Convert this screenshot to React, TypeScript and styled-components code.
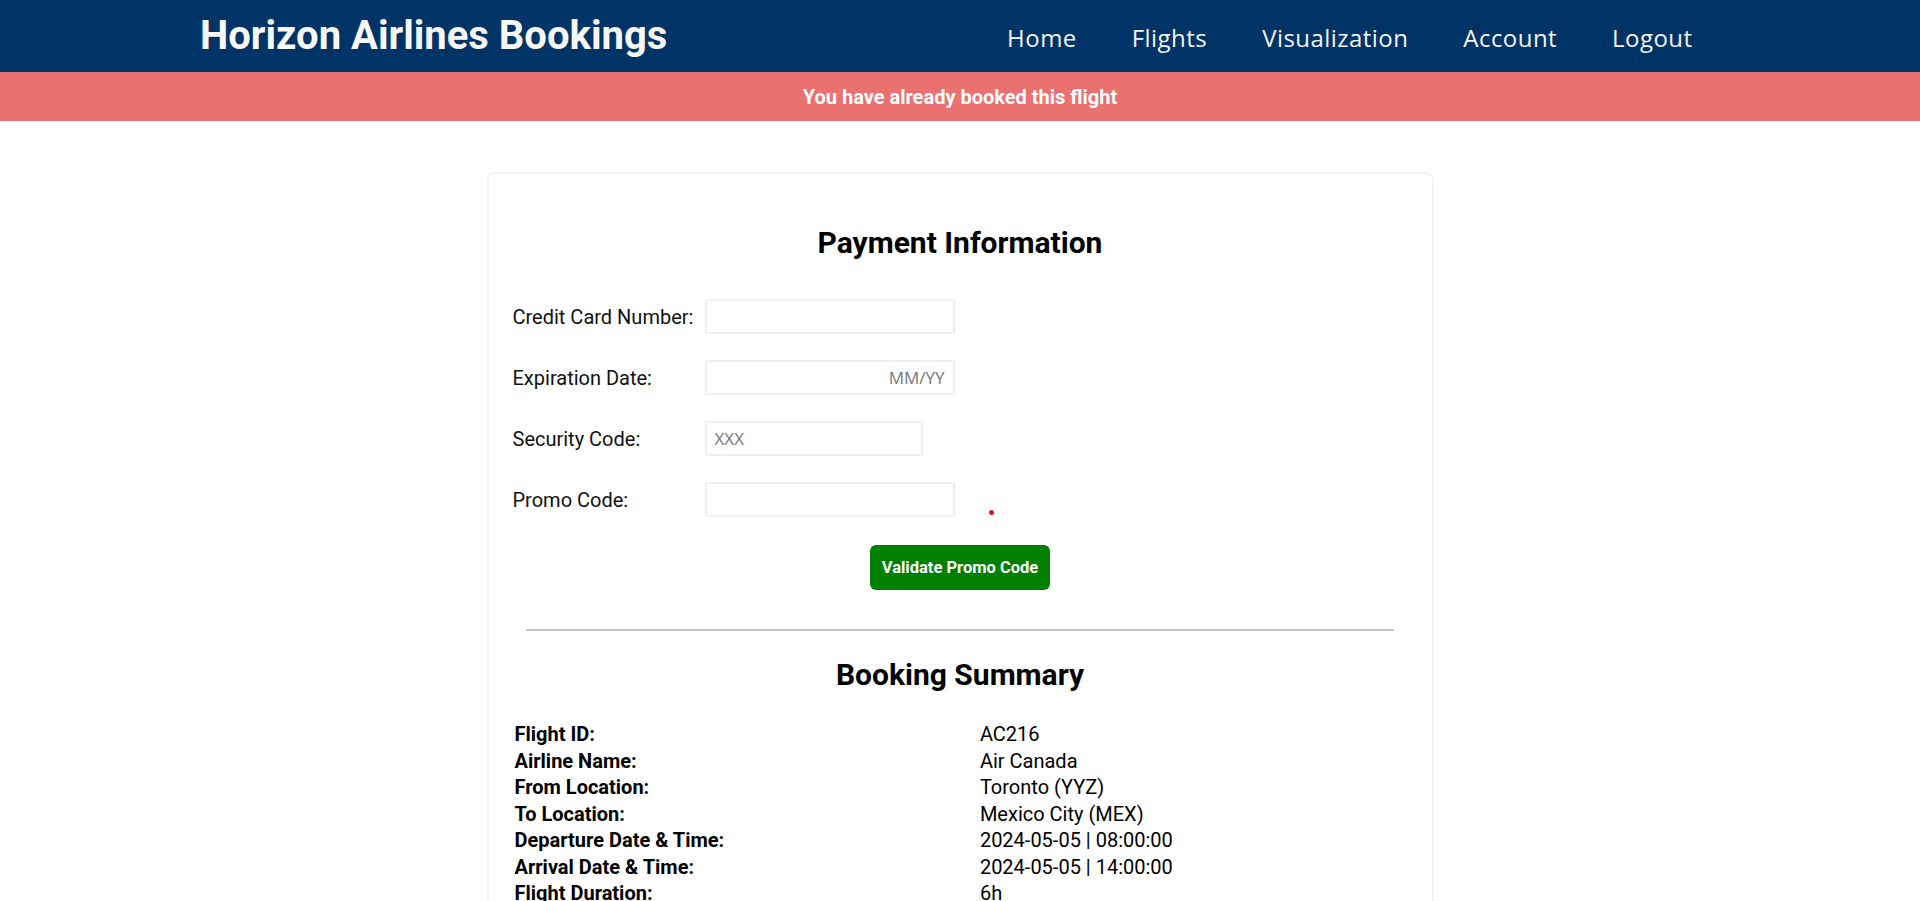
import React from 'react'
import styled, { createGlobalStyle } from 'styled-components';

const GlobalStyle = createGlobalStyle`
  body {
    margin: 0;
    font-family: Roboto, "Liberation Sans", sans-serif;
    color: #000;
    background: #fff;
  }
`;

const summary: [string, string][] = [
  ['Flight ID:', 'AC216'],
  ['Airline Name:', 'Air Canada'],
  ['From Location:', 'Toronto (YYZ)'],
  ['To Location:', 'Mexico City (MEX)'],
  ['Departure Date & Time:', '2024-05-05 | 08:00:00'],
  ['Arrival Date & Time:', '2024-05-05 | 14:00:00'],
  ['Flight Duration:', '6h'],
];

const App = () => {
  return (
    <Page>
      <GlobalStyle />
      <Header>
        <HeaderInner>
          <Brand>Horizon Airlines Bookings</Brand>
          <Nav>
            <NavLink href="#">Home</NavLink>
            <NavLink href="#">Flights</NavLink>
            <NavLink href="#">Visualization</NavLink>
            <NavLink href="#">Account</NavLink>
            <NavLink href="#">Logout</NavLink>
          </Nav>
        </HeaderInner>
      </Header>
      <Alert>You have already booked this flight</Alert>

      <Card>
        <Heading $top={51}>Payment Information</Heading>
        <Form>
          <Row>
            <Label>Credit Card Number:</Label>
            <Input type="text" />
          </Row>
          <Row>
            <Label>Expiration Date:</Label>
            <Input type="text" placeholder="MM/YY" $alignRight />
          </Row>
          <Row>
            <Label>Security Code:</Label>
            <Input type="text" placeholder="XXX" $width={218} />
          </Row>
          <Row>
            <Label>Promo Code:</Label>
            <Input type="text" />
            <PromoDot />
          </Row>
          <Button type="button">Validate Promo Code</Button>
        </Form>

        <Divider />

        <Heading $top={26}>Booking Summary</Heading>
        <SummaryTable>
          <tbody>
            {summary.map(([label, value]) => (
              <tr key={label}>
                <KeyCell>{label}</KeyCell>
                <ValueCell>{value}</ValueCell>
              </tr>
            ))}
          </tbody>
        </SummaryTable>
      </Card>
    </Page>
  )
}

export default App

const Page = styled.div`
  min-height: 1440px;
`;

const Header = styled.header`
  background-color: #003366;
  height: 72px;
`;

const HeaderInner = styled.div`
  max-width: 1520px;
  height: 100%;
  margin: 0 auto;
  display: flex;
  align-items: center;
  justify-content: space-between;
`;

const Brand = styled.h1`
  margin: 0;
  font-size: 40px;
  font-weight: 700;
  color: #f7f7f7;
  line-height: 1;
`;

const Nav = styled.nav`
  display: flex;
  align-items: center;
  padding-top: 2px;
`;

const NavLink = styled.a`
  padding: 0 27.5px;
  font-family: "Open Sans", sans-serif;
  font-size: 24px;
  letter-spacing: 0.45px;
  color: #f4f4f4;
  text-decoration: none;
`;

const Alert = styled.div`
  height: 49px;
  background-color: #eb7070;
  color: #fff;
  font-weight: 700;
  font-size: 20px;
  display: flex;
  align-items: center;
  justify-content: center;
`;

const Card = styled.section`
  box-sizing: border-box;
  width: 947px;
  margin: 51px auto 0;
  padding: 0 24px 24px;
  border: 2px solid #f3f3f3;
  border-radius: 8px;
`;

const Heading = styled.h2<{ $top: number }>`
  margin: ${p => p.$top}px 0 0;
  text-align: center;
  font-size: 30px;
  font-weight: 700;
  line-height: 35px;
`;

const Form = styled.form`
  display: flex;
  flex-direction: column;
  margin-top: 39px;
`;

const Row = styled.div`
  display: flex;
  align-items: center;
  margin-bottom: 26px;
`;

const Label = styled.label`
  width: 192px;
  flex-shrink: 0;
  font-size: 20px;
  color: #111;
`;

const Input = styled.input<{ $width?: number; $alignRight?: boolean }>`
  box-sizing: border-box;
  width: ${p => p.$width ?? 250}px;
  height: 35px;
  padding: 0 8px;
  border: 2px solid #f0f0f0;
  border-radius: 2px;
  font-family: "Open Sans", sans-serif;
  font-size: 17px;
  text-align: ${p => (p.$alignRight ? 'right' : 'left')};
  outline: none;

  &::placeholder {
    color: #777;
  }
`;

const PromoDot = styled.span`
  width: 5px;
  height: 5px;
  border-radius: 50%;
  background-color: #e3141c;
  margin-left: 34px;
  margin-top: 26px;
`;

const Button = styled.button`
  align-self: center;
  height: 45px;
  padding: 0 12px;
  margin-top: 2px;
  font-family: Roboto, sans-serif;
  font-size: 16.5px;
  font-weight: 700;
  color: #fff;
  background-color: #008000;
  border: none;
  border-radius: 6px;
  cursor: pointer;

  &:hover {
    background-color: #006b00;
  }
`;

const Divider = styled.hr`
  width: 97%;
  margin: 39px auto 0;
  border: none;
  border-top: 2px solid #c4c4c4;
`;

const SummaryTable = styled.table`
  width: 100%;
  margin-top: 29px;
  border-collapse: collapse;
  font-size: 20px;
`;

const KeyCell = styled.td`
  width: 52%;
  padding: 2px;
  line-height: 22.5px;
  font-weight: 700;
`;

const ValueCell = styled.td`
  padding: 2px;
  line-height: 22.5px;
`;
